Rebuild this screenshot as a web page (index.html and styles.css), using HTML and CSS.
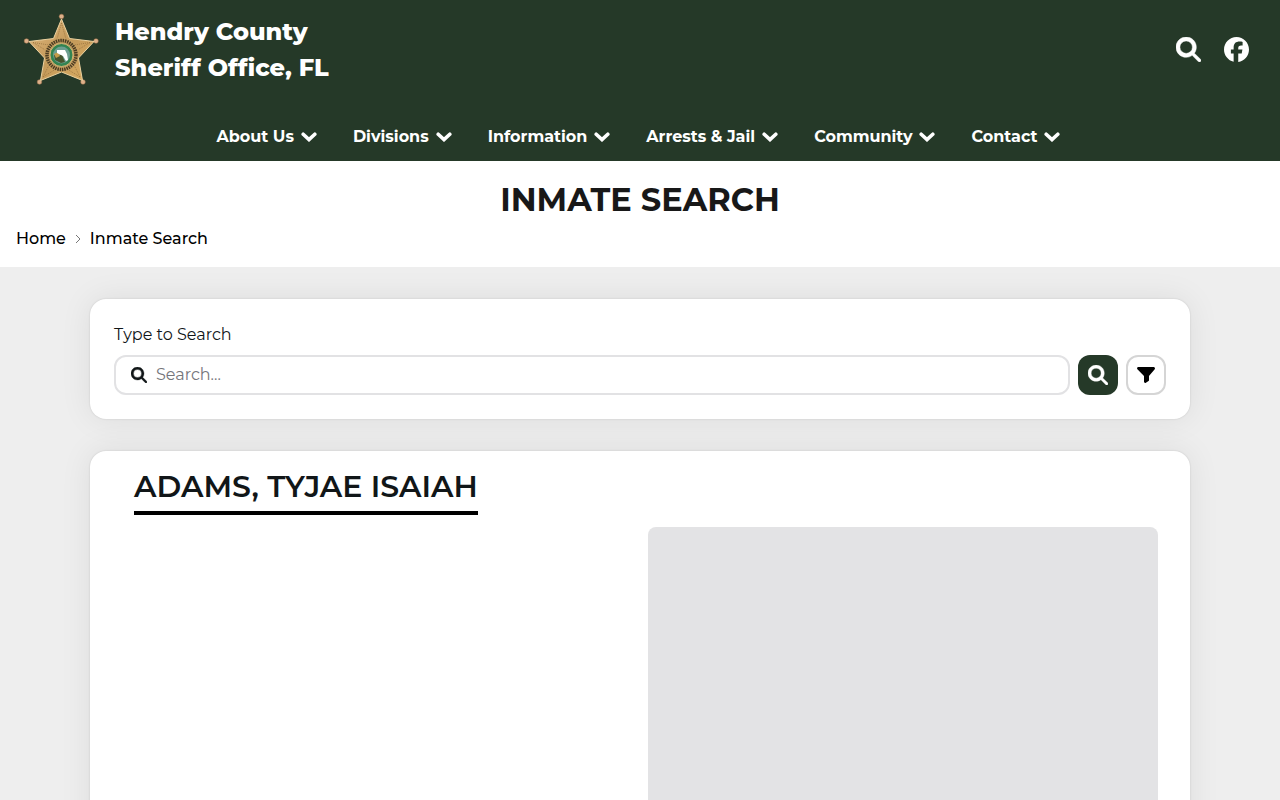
FILE: index.html
```html
<!DOCTYPE html>
<html lang="en">
<head>
<meta charset="utf-8">
<meta name="viewport" content="width=device-width, initial-scale=1">
<title>Inmate Search - Hendry County Sheriff Office, FL</title>
<link rel="stylesheet" href="styles.css">
</head>
<body>
<svg class="symbols" aria-hidden="true">
  <symbol id="search" viewBox="0 0 512 512"><path fill="currentColor" stroke="currentColor" stroke-width="10" d="M416 208c0 45.900-14.900 88.300-40 122.700L502.600 457.400c12.500 12.500 12.500 32.800 0 45.300s-32.800 12.500-45.300 0L330.700 376c-34.400 25.200-76.800 40-122.700 40C93.100 416 0 322.900 0 208S93.100 0 208 0S416 93.100 416 208zM208 336a128 128 0 1 0 0-256 128 128 0 1 0 0 256z"/></symbol>
  <symbol id="chevron" viewBox="0 0 16 10"><path d="M2.200 2.200 8 7.600l5.800-5.400" fill="none" stroke="currentColor" stroke-width="3.600" stroke-linecap="round" stroke-linejoin="miter"/></symbol>
</svg>
<header class="site-header">
  <div class="topbar">
    <a class="brand" href="#">
      <svg class="badge" viewBox="0 0 80 80" aria-hidden="true">
        <defs>
          <linearGradient id="gold" x1="0" y1="0" x2="1" y2="1"><stop offset="0" stop-color="#e0b880"/><stop offset=".5" stop-color="#c49a5a"/><stop offset="1" stop-color="#dcae62"/></linearGradient>
        </defs>
        <g fill="#ddb08a" stroke="#a87850" stroke-width=".5"><circle cx="40.500" cy="5.500" r="2.300"/><circle cx="75" cy="30" r="2.300"/><circle cx="62" cy="71" r="2.300"/><circle cx="18.500" cy="71" r="2.300"/><circle cx="5.500" cy="30" r="2.300"/></g>
        <path d="M40.500 8 48.500 27.500 73 30.500 57.500 47 61.500 69.500 40.500 61 19.500 69.500 23.500 47 8 30.500 32.500 27.500Z" fill="url(#gold)" stroke="#ecd2a0"/>
        <path d="M40.500 12 45 28M40.500 12 36 28M69 31.500 53 34M69 31.500 55 40M59 66 52 52M59 66 46 58M22 66 29 52M22 66 35 58M12 31.500 28 34M12 31.500 26 40" fill="none" stroke="#96713d" stroke-width=".8" stroke-dasharray="1 1"/>
        <circle cx="40.500" cy="44" r="17" fill="#c9a262"/>
        <circle cx="40.500" cy="44" r="14.500" fill="none" stroke="#4d3c22" stroke-width="3.500" stroke-dasharray="1.500 .8"/>
        <circle cx="40.500" cy="44" r="11.500" fill="#338451" stroke="#d5b274"/>
        <circle cx="40.500" cy="44" r="8.500" fill="#6d9e91"/>
        <path d="M33 44h8l3 7-4 1-6-3Z" fill="#48542e"/>
        <path d="M33 43l4-2 2 4-4 2Z" fill="#c59b49"/>
        <path d="M36 39h8l2 4 1 6-2 1-3-5-6-3Z" fill="#fff"/>
      </svg>
      <span class="brand-name">Hendry County<br>Sheriff Office, FL</span>
    </a>
    <div class="tools">
      <button class="icon-button" aria-label="Search site"><svg class="icon-large" aria-hidden="true"><use href="#search"/></svg></button>
      <a class="icon-button" href="#" aria-label="Facebook"><svg class="icon-large" viewBox="0 0 24 24" aria-hidden="true"><path fill="currentColor" d="M24 12.070C24 5.410 18.630 0 12 0S0 5.410 0 12.070C0 17.770 3.940 22.560 9.250 23.870V15.800H6.600v-3.700h2.650v-1.600c0-4.150 1.880-6.070 5.960-6.070.77 0 2.110.15 2.650.3v3.380c-.29-.03-.79-.05-1.410-.05-2 0-2.770.76-2.770 2.730v1.310h4l-.69 3.700h-3.310v8.180C19.700 23.230 24 18.150 24 12.070Z"/></svg></a>
    </div>
  </div>
  <nav class="main-nav" aria-label="Main">
    <button class="nav-item">About Us<svg class="chevron" aria-hidden="true"><use href="#chevron"/></svg></button>
    <button class="nav-item">Divisions<svg class="chevron" aria-hidden="true"><use href="#chevron"/></svg></button>
    <button class="nav-item">Information<svg class="chevron" aria-hidden="true"><use href="#chevron"/></svg></button>
    <button class="nav-item">Arrests &amp; Jail<svg class="chevron" aria-hidden="true"><use href="#chevron"/></svg></button>
    <button class="nav-item">Community<svg class="chevron" aria-hidden="true"><use href="#chevron"/></svg></button>
    <button class="nav-item">Contact<svg class="chevron" aria-hidden="true"><use href="#chevron"/></svg></button>
  </nav>
</header>
<section class="page-head">
  <h1 class="page-title">INMATE SEARCH</h1>
  <nav class="breadcrumb" aria-label="Breadcrumb">
    <a href="#">Home</a>
    <svg class="crumb-arrow" viewBox="0 0 6 10" aria-hidden="true"><path d="M1 1l4 4-4 4" fill="none" stroke="#777"/></svg>
    <a href="#">Inmate Search</a>
  </nav>
</section>
<main class="content">
  <form class="card search-card">
    <label class="search-label" for="query">Type to Search</label>
    <div class="search-row">
      <div class="search-field">
        <svg class="icon-small" aria-hidden="true"><use href="#search"/></svg>
        <input class="search-input" id="query" type="text" placeholder="Search...">
      </div>
      <button class="action submit" type="submit" aria-label="Search"><svg class="icon-medium" aria-hidden="true"><use href="#search"/></svg></button>
      <button class="action filter" type="button" aria-label="Filter"><svg class="icon-funnel" viewBox="0 0 18 16" aria-hidden="true"><path fill="currentColor" d="M1.500 0h15c1.200 0 1.900 1.300 1.200 2.200L12 9v4.200c0 .4-.2.700-.5.900l-2.600 1.700c-.8.500-1.900 0-1.900-1V9L.4 2.200C-.4 1.300.3 0 1.500 0Z"/></svg></button>
    </div>
  </form>
  <article class="card inmate-card">
    <h2 class="inmate-name">ADAMS, TYJAE ISAIAH</h2>
    <div class="inmate-body">
      <div class="inmate-details"></div>
      <div class="photo"></div>
    </div>
  </article>
</main>
</body>
</html>
```
FILE: styles.css
```css
*, *::before, *::after { box-sizing: border-box; }
body {
  margin: 0;
  background: #eee;
  color: #111618;
  font: 16px/24px Montserrat, Inter, sans-serif;
}
a { color: inherit; text-decoration: none; }
button { padding: 0; border: 0; background: none; color: inherit; font: inherit; cursor: pointer; }
svg { display: block; flex: none; }
.symbols { position: absolute; width: 0; height: 0; }

.site-header { background: #253928; color: #fff; }
.topbar {
  display: flex;
  align-items: flex-start;
  justify-content: space-between;
  padding: 11px 31px 0 21px;
}
.brand { display: flex; gap: 14px; }
.badge { width: 80px; height: 80px; }
.brand-name { padding-top: 3px; font-size: 24px; line-height: 36px; font-weight: 800; }
.tools { display: flex; gap: 23px; padding-top: 26px; }
.icon-large { width: 25px; height: 25px; }
.main-nav { display: flex; flex-wrap: wrap; justify-content: center; gap: 36px; padding: 34px 3px 12px 0; }
.nav-item { display: flex; align-items: center; gap: 7px; font-size: 16px; line-height: 24px; font-weight: 700; }
.chevron { width: 16px; height: 10px; }

.page-head { padding: 19px 16px 16px; background: #fff; }
.page-title { margin: 0; color: #181818; font-size: 32px; line-height: 40px; font-weight: 700; text-align: center; }
.breadcrumb { display: flex; align-items: center; gap: 9px; padding-top: 7px; color: #000; font-weight: 500; }
.crumb-arrow { width: 6px; height: 10px; }

.content { display: grid; gap: 32px; max-width: 1132px; margin: 0 auto; padding: 32px 16px; }
.card { border-radius: 16px; background: #fff; box-shadow: 0 0 2px rgba(0, 0, 0, .15), 0 0 32px rgba(0, 0, 0, .08); }
.search-card { padding: 24px; }
.search-label { display: block; margin-bottom: 8px; }
.search-row { display: flex; gap: 8px; }
.search-field {
  display: flex;
  flex: 1;
  align-items: center;
  gap: 9px;
  height: 40px;
  padding: 0 15px;
  border: 2px solid #e2e2e4;
  border-radius: 12px;
}
.icon-small { width: 16px; height: 16px; }
.search-input { flex: 1; min-width: 0; padding: 0; border: 0; outline: 0; background: none; color: inherit; font: inherit; }
.search-input::placeholder { color: #75757b; opacity: 1; }
.action { display: flex; align-items: center; justify-content: center; width: 40px; height: 40px; border-radius: 12px; }
.submit { background: #253928; color: #fff; }
.filter { border: 2px solid #d5d5d5; color: #000; }
.icon-medium { width: 20px; height: 20px; }
.icon-funnel { width: 18px; height: 16px; }

.inmate-card { padding: 16px 32px 32px; }
.inmate-name {
  width: fit-content;
  margin: 0 12px 12px;
  border-bottom: 4px solid #000;
  font-size: 30px;
  line-height: 40px;
  padding-bottom: 4px;
  font-weight: 600;
}
.inmate-body { display: grid; grid-template-columns: 1fr 1fr; gap: 16px; }
.photo { aspect-ratio: 4 / 5; border-radius: 8px; background: #e3e3e5; }
```
